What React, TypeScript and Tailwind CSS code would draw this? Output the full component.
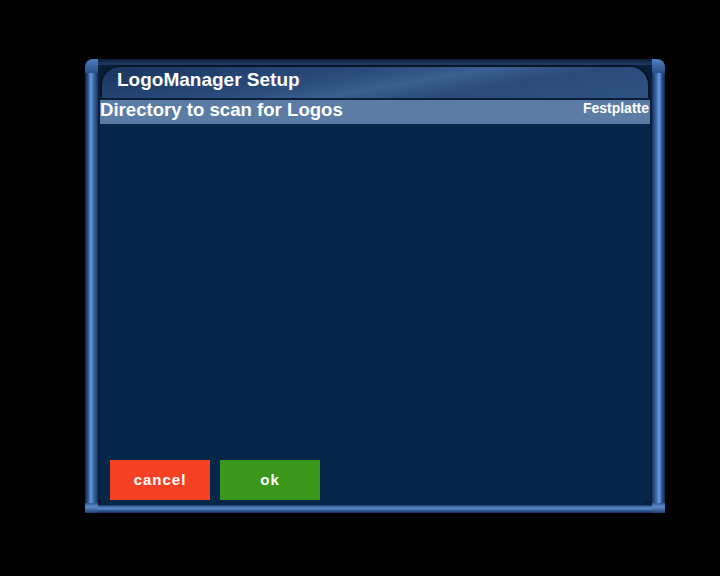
import React from "react";

export default function App() {
  return (
    <div className="w-[720px] h-[576px] bg-black pt-[59px] pl-[85px]" style={{ fontFamily: '"Liberation Sans", Arial, sans-serif' }}>
      <div className="w-[580px] h-[454px] flex flex-row">
        {/* left tube */}
        <div className="w-[13px] h-full flex flex-col">
          <div className="h-[14px] rounded-tl-[8px] bg-[linear-gradient(180deg,#4d7fc0,#2a5089)]" />
          <div className="flex-1 bg-[linear-gradient(90deg,#0e2245,#2f5a97_25%,#6b9ad6_45%,#3d6cab_65%,#17325e)]" />
          <div className="h-[10px] bg-[linear-gradient(180deg,#2f5a97,#5d8ccc_40%,#1d3d70)]" />
        </div>
        {/* middle */}
        <div className="flex-1 flex flex-col bg-[#0b1d38]">
          <div className="h-[6px] bg-[linear-gradient(180deg,#0d1d35,#1f3a64)]" />
          <div className="h-[33px] mx-[2px] rounded-t-[20px] border-t-2 border-l-2 border-r-2 border-[#0a1426] bg-[linear-gradient(170deg,#1a355e_0%,#2a4c7c_40%,#3a5f90_55%,#2a4b7a_70%,#2f5283_100%)] flex items-center pl-[15px] pb-[6px]">
            <span className="text-white font-bold text-[19px] leading-none">LogoManager Setup</span>
          </div>
          <div className="flex-1 mx-[2px] mt-[2px] bg-[#06264a] flex flex-col rounded-b-[10px]">
            <div className="h-[24px] bg-[#5b7da5] flex flex-row justify-between">
              <span className="text-white font-bold text-[18.6px] leading-[20px]">Directory to scan for Logos</span>
              <span className="text-white font-bold text-[14px] leading-[16px] pr-[1px]">Festplatte</span>
            </div>
            <div className="flex-1" />
            <div className="flex flex-row gap-[10px] pl-[10px] pb-[5px]">
              <div className="w-[100px] h-[40px] bg-[#f44123] flex items-center justify-center text-white font-bold text-[15px] tracking-[1px]">cancel</div>
              <div className="w-[100px] h-[40px] bg-[#3b961c] flex items-center justify-center text-white font-bold text-[15px] tracking-[1px]">ok</div>
            </div>
          </div>
          <div className="h-[8px] bg-[linear-gradient(180deg,#1e3c6c,#5d8ccc_40%,#2f5a97_70%,#142b52)]" />
        </div>
        {/* right tube */}
        <div className="w-[13px] h-full flex flex-col">
          <div className="h-[14px] rounded-tr-[8px] bg-[linear-gradient(180deg,#4d7fc0,#2a5089)]" />
          <div className="flex-1 bg-[linear-gradient(90deg,#17325e,#3d6cab_35%,#6b9ad6_55%,#2f5a97_75%,#0e2245)]" />
          <div className="h-[10px] bg-[linear-gradient(180deg,#2f5a97,#5d8ccc_40%,#1d3d70)]" />
        </div>
      </div>
    </div>
  );
}
